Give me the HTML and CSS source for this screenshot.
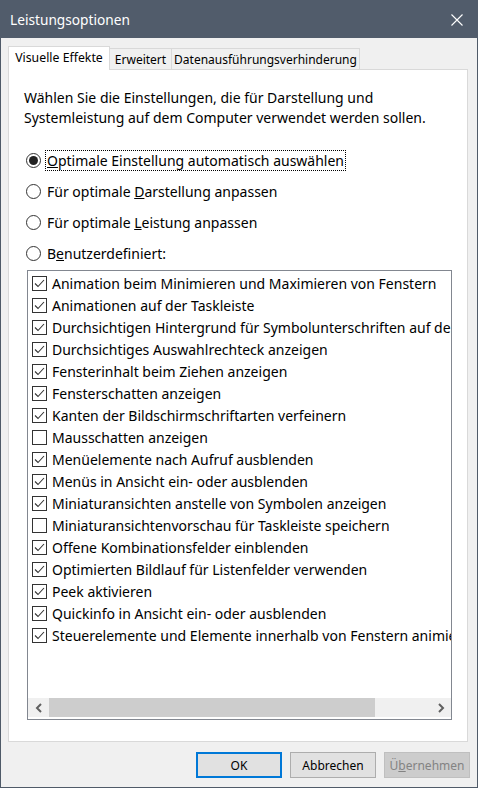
FILE: index.html
```html
<!DOCTYPE html>
<html lang="de">
<head>
<meta charset="utf-8">
<title>Leistungsoptionen</title>
<link rel="stylesheet" href="styles.css">
</head>
<body>
<div class="window">
  <div class="titlebar">
    <span class="title">Leistungsoptionen</span>
    <svg class="close" width="12" height="12" viewBox="0 0 12 12"><path d="M0.5 0.5 L11.5 11.5 M11.5 0.5 L0.5 11.5" stroke="#ffffff" stroke-width="1.1" fill="none"/></svg>
  </div>
  <div class="content">
    <div class="tabs">
      <div class="tab active tab-ve">Visuelle Effekte</div>
      <div class="tab tab-er">Erweitert</div>
      <div class="tab tab-da">Datenausführungsverhinderung</div>
    </div>
    <div class="panel">
      <p class="desc">Wählen Sie die Einstellungen, die für Darstellung und<br>Systemleistung auf dem Computer verwendet werden sollen.</p>
      <div class="radios">
        <div class="radio-row"><span class="radio checked"></span><span class="label focus"><u>O</u>ptimale Einstellung automatisch auswählen</span></div>
        <div class="radio-row"><span class="radio"></span><span class="label">Für optimale <u>D</u>arstellung anpassen</span></div>
        <div class="radio-row"><span class="radio"></span><span class="label">Für optimale <u>L</u>eistung anpassen</span></div>
        <div class="radio-row"><span class="radio"></span><span class="label">B<u>e</u>nutzerdefiniert:</span></div>
      </div>
      <div class="listbox">
        <div class="items">
          <div class="item"><span class="cb on"><svg viewBox="0 0 13 13" width="13" height="13"><polyline points="2,6.5 5,9.5 11,3" /></svg></span><span class="itext">Animation beim Minimieren und Maximieren von Fenstern</span></div>
          <div class="item"><span class="cb on"><svg viewBox="0 0 13 13" width="13" height="13"><polyline points="2,6.5 5,9.5 11,3" /></svg></span><span class="itext">Animationen auf der Taskleiste</span></div>
          <div class="item"><span class="cb on"><svg viewBox="0 0 13 13" width="13" height="13"><polyline points="2,6.5 5,9.5 11,3" /></svg></span><span class="itext">Durchsichtigen Hintergrund für Symbolunterschriften auf dem Desktop</span></div>
          <div class="item"><span class="cb on"><svg viewBox="0 0 13 13" width="13" height="13"><polyline points="2,6.5 5,9.5 11,3" /></svg></span><span class="itext">Durchsichtiges Auswahlrechteck anzeigen</span></div>
          <div class="item"><span class="cb on"><svg viewBox="0 0 13 13" width="13" height="13"><polyline points="2,6.5 5,9.5 11,3" /></svg></span><span class="itext">Fensterinhalt beim Ziehen anzeigen</span></div>
          <div class="item"><span class="cb on"><svg viewBox="0 0 13 13" width="13" height="13"><polyline points="2,6.5 5,9.5 11,3" /></svg></span><span class="itext">Fensterschatten anzeigen</span></div>
          <div class="item"><span class="cb on"><svg viewBox="0 0 13 13" width="13" height="13"><polyline points="2,6.5 5,9.5 11,3" /></svg></span><span class="itext">Kanten der Bildschirmschriftarten verfeinern</span></div>
          <div class="item"><span class="cb"></span><span class="itext">Mausschatten anzeigen</span></div>
          <div class="item"><span class="cb on"><svg viewBox="0 0 13 13" width="13" height="13"><polyline points="2,6.5 5,9.5 11,3" /></svg></span><span class="itext">Menüelemente nach Aufruf ausblenden</span></div>
          <div class="item"><span class="cb on"><svg viewBox="0 0 13 13" width="13" height="13"><polyline points="2,6.5 5,9.5 11,3" /></svg></span><span class="itext">Menüs in Ansicht ein- oder ausblenden</span></div>
          <div class="item"><span class="cb on"><svg viewBox="0 0 13 13" width="13" height="13"><polyline points="2,6.5 5,9.5 11,3" /></svg></span><span class="itext">Miniaturansichten anstelle von Symbolen anzeigen</span></div>
          <div class="item"><span class="cb"></span><span class="itext">Miniaturansichtenvorschau für Taskleiste speichern</span></div>
          <div class="item"><span class="cb on"><svg viewBox="0 0 13 13" width="13" height="13"><polyline points="2,6.5 5,9.5 11,3" /></svg></span><span class="itext">Offene Kombinationsfelder einblenden</span></div>
          <div class="item"><span class="cb on"><svg viewBox="0 0 13 13" width="13" height="13"><polyline points="2,6.5 5,9.5 11,3" /></svg></span><span class="itext">Optimierten Bildlauf für Listenfelder verwenden</span></div>
          <div class="item"><span class="cb on"><svg viewBox="0 0 13 13" width="13" height="13"><polyline points="2,6.5 5,9.5 11,3" /></svg></span><span class="itext">Peek aktivieren</span></div>
          <div class="item"><span class="cb on"><svg viewBox="0 0 13 13" width="13" height="13"><polyline points="2,6.5 5,9.5 11,3" /></svg></span><span class="itext">Quickinfo in Ansicht ein- oder ausblenden</span></div>
          <div class="item"><span class="cb on"><svg viewBox="0 0 13 13" width="13" height="13"><polyline points="2,6.5 5,9.5 11,3" /></svg></span><span class="itext">Steuerelemente und Elemente innerhalb von Fenstern animieren</span></div>
        </div>
        <div class="hscroll">
          <span class="arrow"><svg width="8" height="10" viewBox="0 0 8 10"><polyline points="6,1 2,5 6,9" fill="none" stroke="#606060" stroke-width="2"/></svg></span>
          <span class="track"><span class="thumb"></span></span>
          <span class="arrow"><svg width="8" height="10" viewBox="0 0 8 10"><polyline points="2,1 6,5 2,9" fill="none" stroke="#606060" stroke-width="2"/></svg></span>
        </div>
      </div>
    </div>
    <div class="footer">
      <button class="btn default">OK</button>
      <button class="btn">Abbrechen</button>
      <button class="btn disabled">Ü<u>b</u>ernehmen</button>
    </div>
  </div>
</div>
</body>
</html>
```
FILE: styles.css
```css
* { box-sizing: border-box; }
html, body { margin: 0; padding: 0; }
body {
  width: 478px;
  height: 788px;
  font-family: "Noto Sans", "Open Sans", sans-serif;
  font-size: 14px;
  color: #000;
  background: #f0f0f0;
  overflow: hidden;
}
.window {
  width: 478px;
  height: 788px;
  border: 1px solid #4f5a68;
  border-top: none;
  background: #f0f0f0;
  display: flex;
  flex-direction: column;
}
.titlebar {
  height: 38px;
  flex: none;
  background: #515c6b;
  color: #fff;
  display: flex;
  align-items: center;
  justify-content: space-between;
  padding: 0 15px 0 9px;
  margin: 0 -1px;
}
.title { font-size: 13.7px; padding-left: 1px; }
.close { display: block; margin-top: 1px; }
.content {
  padding: 8px 9px 0 7px;
  display: flex;
  flex-direction: column;
}
.tabs {
  display: flex;
  align-items: flex-end;
  height: 24px;
  margin-bottom: -1px;
  position: relative;
  z-index: 1;
}
.tab {
  height: 21px;
  margin-bottom: 1px;
  border: 1px solid #d9d9d9;
  border-bottom: none;
  background: #f0f0f0;
  display: flex;
  align-items: center;
  justify-content: center;
  white-space: nowrap;
  line-height: 1;
  font-size: 12px;
  padding-top: 1px;
}
.tab.active {
  height: 24px;
  margin-bottom: 0;
  background: #fff;
  padding-bottom: 2px;
  font-size: 12.3px;
}
.tab-ve { width: 102px; }
.tab-er { width: 62px; border-left: none; }
.tab-da { width: 188px; border-left: none; }
.panel {
  height: 673px;
  background: #fff;
  border: 1px solid #d9d9d9;
  padding: 18px 15px 0 15px;
}
.desc {
  margin: 0;
  line-height: 20px;
}
.radios {
  margin-top: 17px;
  display: flex;
  flex-direction: column;
}
.radio-row {
  height: 31px;
  display: flex;
  align-items: center;
  padding-left: 2px;
}
.radio {
  width: 15px;
  height: 15px;
  border: 1px solid #333;
  border-radius: 50%;
  background: #fff;
  flex: none;
  display: flex;
  align-items: center;
  justify-content: center;
}
.radio.checked::after {
  content: "";
  width: 9px;
  height: 9px;
  border-radius: 50%;
  background: #222;
}
.label {
  margin-left: 4px;
  padding: 0 1px;
  line-height: 19px;
  border: 1px dotted transparent;
}
.label.focus { border-color: #000; }
.listbox {
  margin-top: 1px;
  margin-left: 3px;
  width: 425px;
  height: 450px;
  border: 1px solid #828790;
  display: flex;
  flex-direction: column;
  overflow: hidden;
}
.items {
  flex: 1;
  padding: 1px 0 0 4px;
  overflow: hidden;
}
.item {
  height: 22px;
  display: flex;
  align-items: center;
  white-space: nowrap;
}
.cb {
  width: 15px;
  height: 15px;
  border: 1px solid #333;
  background: #fff;
  flex: none;
  display: flex;
}
.cb svg polyline {
  fill: none;
  stroke: #333;
  stroke-width: 1.1;
}
.itext { margin-left: 5px; }
.hscroll {
  height: 19px;
  margin-bottom: 2px;
  flex: none;
  display: flex;
  background: #f0f0f0;
}
.arrow {
  width: 21px;
  flex: none;
  display: flex;
  align-items: center;
  justify-content: center;
}
.track {
  flex: 1;
  display: flex;
  align-items: stretch;
}
.thumb {
  width: 326px;
  background: #cdcdcd;
}
.footer {
  display: flex;
  justify-content: flex-end;
  gap: 8px;
  padding: 10px 0 0 0;
  margin-right: -2px;
}
.btn {
  width: 86px;
  height: 26px;
  font-family: inherit;
  font-size: 12px;
  color: #000;
  background: #e1e1e1;
  border: 1px solid #adadad;
  padding: 0;
  margin: 0;
}
.btn.default {
  border: 2px solid #0078d7;
}
.btn.disabled {
  background: #cccccc;
  border-color: #bfbfbf;
  color: #838383;
}
```
